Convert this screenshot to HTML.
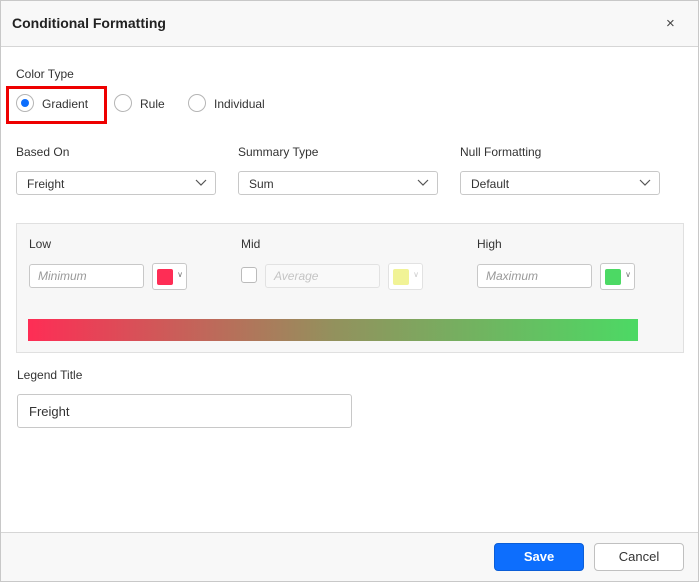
<!DOCTYPE html>
<html><head><style>
*{box-sizing:border-box;margin:0;padding:0}
body{width:699px;height:582px;background:#fff;font-family:"Liberation Sans",Arial,sans-serif;color:#333;position:relative;overflow:hidden}
.brd{position:absolute;left:0;top:0;width:699px;height:582px;border:1px solid #c8c8c8;}
.hdr{position:absolute;left:0;top:0;width:699px;height:47px;background:#f8f8f8;border-bottom:1px solid #d6d6d6}
.hdr .t{position:absolute;left:12px;top:15px;font-size:14px;font-weight:bold;color:#222}
.hdr .x{position:absolute;left:666px;top:15px;font-size:15px;color:#444}
.a{position:absolute;font-size:12px;color:#333}
.radio{position:absolute;width:18px;height:18px;border:1px solid #b5b5b5;border-radius:50%;background:#fff}
.radio.on::after{content:"";position:absolute;left:4px;top:4px;width:8px;height:8px;border-radius:50%;background:#0d6efd}
.dd{position:absolute;height:24px;width:200px;border:1px solid #c8c8c8;border-radius:3px;font-size:12px;padding:5px 10px;color:#333}
.dd svg{position:absolute;right:8px;top:7px}
.panel{position:absolute;left:16px;top:223px;width:668px;height:130px;background:#f7f7f7;border:1px solid #e0e0e0}
.inp{position:absolute;height:24px;width:115px;border:1px solid #c8c8c8;border-radius:3px;background:#fff;font-size:12px;font-style:italic;color:#999;padding:4px 8px}
.sw{position:absolute;width:35px;height:27px;border:1px solid #c8c8c8;border-radius:3px;background:#fff}
.sw i{position:absolute;left:4px;top:5px;width:16px;height:16px;border-radius:2px}
.sw b{position:absolute;right:3px;top:6px;font-size:8px;font-weight:normal;color:#777}
.btn{position:absolute;top:543px;height:28px;border-radius:4px;font-size:13px;text-align:center;line-height:26px}
</style></head><body>
<div class="hdr"><div class="t">Conditional Formatting</div><div class="x">×</div></div>
<div class="a" style="left:16px;top:67px">Color Type</div>
<div style="position:absolute;left:6px;top:86px;width:101px;height:38px;border:3px solid #e00"></div>
<div class="radio on" style="left:16px;top:94px"></div><div class="a" style="left:42px;top:97px">Gradient</div>
<div class="radio" style="left:114px;top:94px"></div><div class="a" style="left:140px;top:97px">Rule</div>
<div class="radio" style="left:188px;top:94px"></div><div class="a" style="left:214px;top:97px">Individual</div>
<div class="a" style="left:16px;top:145px">Based On</div>
<div class="a" style="left:238px;top:145px">Summary Type</div>
<div class="a" style="left:460px;top:145px">Null Formatting</div>
<div class="dd" style="left:16px;top:171px">Freight<svg width="12" height="8"><path d="M1 1l5 5 5-5" fill="none" stroke="#555" stroke-width="1.2"/></svg></div>
<div class="dd" style="left:238px;top:171px">Sum<svg width="12" height="8"><path d="M1 1l5 5 5-5" fill="none" stroke="#555" stroke-width="1.2"/></svg></div>
<div class="dd" style="left:460px;top:171px">Default<svg width="12" height="8"><path d="M1 1l5 5 5-5" fill="none" stroke="#555" stroke-width="1.2"/></svg></div>
<div class="panel"></div>
<div class="a" style="left:29px;top:237px">Low</div>
<div class="a" style="left:241px;top:237px">Mid</div>
<div class="a" style="left:477px;top:237px">High</div>
<div class="inp" style="left:29px;top:264px">Minimum</div>
<div class="sw" style="left:152px;top:263px"><i style="background:#fe2d55"></i><b>∨</b></div>
<div style="position:absolute;left:241px;top:267px;width:16px;height:16px;border:1px solid #bbb;border-radius:3px;background:#fff"></div>
<div class="inp" style="left:265px;top:264px;border-color:#e2e2e2;color:#c4c4c4;background:#f9f9f9">Average</div>
<div class="sw" style="left:388px;top:263px;border-color:#e2e2e2"><i style="background:#f1f396"></i><b style="color:#ccc">∨</b></div>
<div class="inp" style="left:477px;top:264px">Maximum</div>
<div class="sw" style="left:600px;top:263px"><i style="background:#4cd964"></i><b>∨</b></div>
<div style="position:absolute;left:28px;top:319px;width:610px;height:22px;background:linear-gradient(to right,#fe2d55,#93915d,#4cd964)"></div>
<div class="a" style="left:17px;top:368px">Legend Title</div>
<div style="position:absolute;left:17px;top:394px;width:335px;height:34px;border:1px solid #c8c8c8;border-radius:3px;font-size:13px;padding:9px 11px;color:#333">Freight</div>
<div style="position:absolute;left:0;top:532px;width:699px;height:50px;background:#f8f8f8;border-top:1px solid #d6d6d6"></div>
<div class="btn" style="left:494px;width:90px;background:#0d6efd;border:1px solid #0b5ed7;color:#fff;font-weight:bold">Save</div>
<div class="btn" style="left:594px;width:90px;background:#fff;border:1px solid #c0c0c0;color:#333">Cancel</div>
<div class="brd"></div>
</body></html>
